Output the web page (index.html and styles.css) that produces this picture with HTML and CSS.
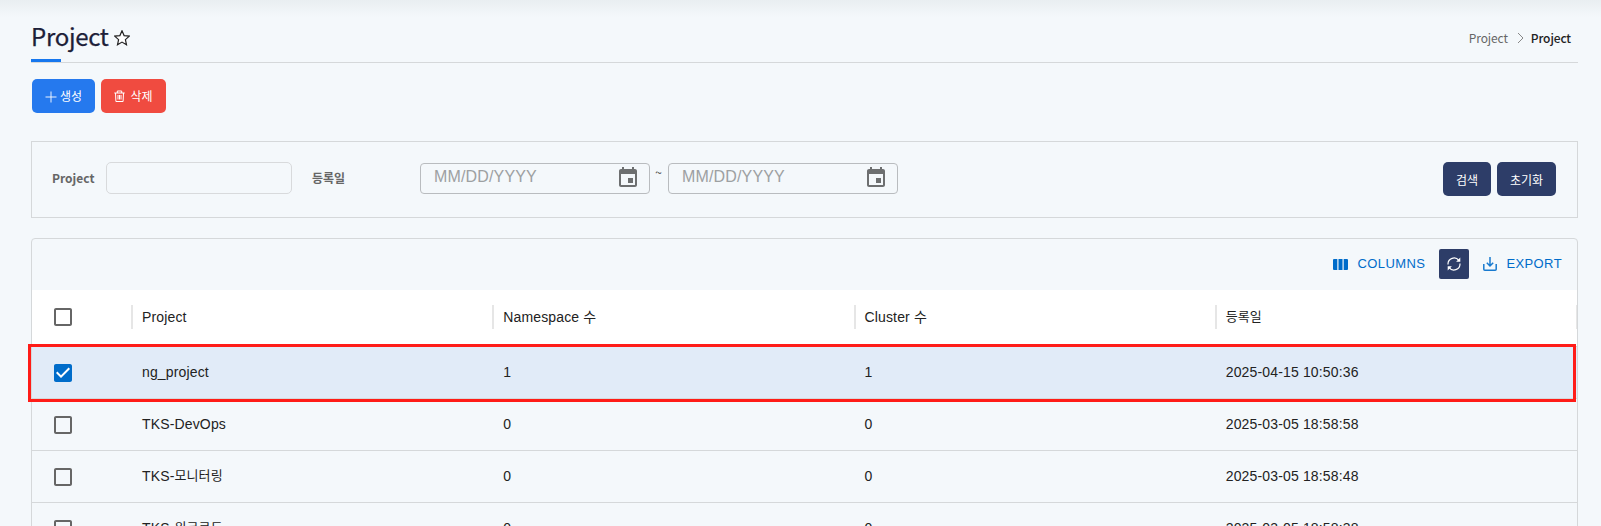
FILE: index.html
```html
<!DOCTYPE html>
<html lang="ko">
<head>
<meta charset="utf-8">
<title>Project</title>
<link rel="stylesheet" href="styles.css">
</head>
<body>
<svg class="defs" width="0" height="0">
  <symbol id="event" viewBox="0 0 24 24"><path d="M17 12h-5v5h5v-5zM16 1v2H8V1H6v2H5c-1.11 0-1.99.9-1.99 2L3 19c0 1.1.89 2 2 2h14c1.1 0 2-.9 2-2V5c0-1.1-.9-2-2-2h-1V1h-2zm3 18H5V8h14v11z"/></symbol>
  <symbol id="box" viewBox="0 0 24 24"><path d="M19 5v14H5V5h14m0-2H5c-1.1 0-2 .9-2 2v14c0 1.1.9 2 2 2h14c1.1 0 2-.9 2-2V5c0-1.1-.9-2-2-2z"/></symbol>
  <symbol id="box-on" viewBox="0 0 24 24"><path d="M19 3H5c-1.11 0-2 .9-2 2v14c0 1.1.89 2 2 2h14c1.11 0 2-.9 2-2V5c0-1.1-.89-2-2-2zm-9 14l-5-5 1.41-1.41L10 14.17l7.59-7.59L19 8l-9 9z"/></symbol>
</svg>
<main class="page">
  <header class="page-head">
    <h1 class="title">Project</h1>
    <svg class="star" viewBox="0 0 16 16"><path d="M8 .8l2.100 4.800 5.200.5-3.900 3.500 1.100 5.100L8 12.100l-4.500 2.600 1.100-5.100L.7 6.100l5.200-.5z"/></svg>
    <nav class="crumbs">
      <span>Project</span>
      <svg class="chevron" viewBox="0 0 7 12"><path d="M1 1l5 5-5 5"/></svg>
      <span class="current">Project</span>
    </nav>
  </header>
  <div class="actions">
    <button class="btn create"><svg class="plus" viewBox="0 0 12 12"><path d="M6 .5v11M.5 6h11"/></svg>생성</button>
    <button class="btn remove"><svg class="trash" viewBox="0 0 11 12"><path d="M.3 3h10.400M3.300 3V1h4.400v2M1.500 3l.4 8.500h7.200L9.500 3M4 5v4.500M5.500 5v4.500M7 5v4.500"/></svg>삭제</button>
  </div>
  <section class="filter">
    <label class="label">Project</label>
    <div class="input"></div>
    <label class="label date-label">등록일</label>
    <div class="date"><span>MM/DD/YYYY</span><svg class="cal"><use href="#event"/></svg></div>
    <span class="tilde">~</span>
    <div class="date"><span>MM/DD/YYYY</span><svg class="cal"><use href="#event"/></svg></div>
    <div class="filter-buttons">
      <button class="btn navy">검색</button>
      <button class="btn navy">초기화</button>
    </div>
  </section>
  <section class="grid">
    <div class="toolbar">
      <span class="tool"><svg class="cols" viewBox="0 0 15 11"><path d="M1 0h3.300v11H1a1 1 0 0 1-1-1V1a1 1 0 0 1 1-1zM5.500 0h4v11h-4zM10.700 0H14a1 1 0 0 1 1 1v9a1 1 0 0 1-1 1h-3.300z"/></svg>COLUMNS</span>
      <button class="refresh"><svg viewBox="0 0 14 14"><path d="M1 7.500V7A6 6 0 0 1 11.800 3.400M13 6.500V7A6 6 0 0 1 2.200 10.600"/><path class="tip" d="M13.300.6v4.200H9.100zM.7 13.400V9.200h4.200z"/></svg></button>
      <span class="tool export"><svg class="down" viewBox="0 0 14 14"><path d="M.8 7v5.200c0 .6.4 1 1 1h10.400c.6 0 1-.4 1-1V7M7 0v8.500M3.800 5.800L7 9l3.200-3.200"/></svg>EXPORT</span>
    </div>
    <div class="row head">
      <div class="cell check"><svg><use href="#box"/></svg></div>
      <div class="cell">Project</div>
      <div class="cell">Namespace 수</div>
      <div class="cell">Cluster 수</div>
      <div class="cell"><span class="ko">등록일</span></div>
    </div>
    <div class="row selected">
      <div class="cell check"><svg><use href="#box-on"/></svg></div>
      <div class="cell">ng_project</div><div class="cell">1</div><div class="cell">1</div><div class="cell">2025-04-15 10:50:36</div>
    </div>
    <div class="row">
      <div class="cell check"><svg><use href="#box"/></svg></div>
      <div class="cell">TKS-DevOps</div><div class="cell">0</div><div class="cell">0</div><div class="cell">2025-03-05 18:58:58</div>
    </div>
    <div class="row">
      <div class="cell check"><svg><use href="#box"/></svg></div>
      <div class="cell">TKS-<span class="ko">모니터링</span></div><div class="cell">0</div><div class="cell">0</div><div class="cell">2025-03-05 18:58:48</div>
    </div>
    <div class="row">
      <div class="cell check"><svg><use href="#box"/></svg></div>
      <div class="cell">TKS-<span class="ko">워크로드</span></div><div class="cell">0</div><div class="cell">0</div><div class="cell">2025-03-05 18:58:38</div>
    </div>
  </section>
</main>
</body>
</html>
```

FILE: styles.css
```css
*, *::after { box-sizing: border-box; }
html, body { margin: 0; height: 526px; overflow: hidden; }
body {
  background: linear-gradient(#e9eef1 0, #f4f8fb 17px) #f4f8fb;
  font-family: "Noto Sans CJK KR", sans-serif;
  color: #222;
}
svg { display: block; flex: none; }
.defs { position: absolute; }
button { border: 0; margin: 0; font: inherit; }
.page { height: 526px; overflow: hidden; padding: 0 23px 0 31px; }

.page-head {
  position: relative;
  display: flex;
  align-items: center;
  height: 63px;
  padding: 13px 7px 0 0;
  border-bottom: 1px solid #d5d8da;
}
.page-head::after {
  content: "";
  position: absolute;
  left: 0;
  bottom: 0;
  width: 30px;
  height: 3px;
  background: #1677ee;
}
.title { margin: 0; padding-bottom: 3px; width: 77px; font-size: 24px; font-weight: 400; line-height: 36px; letter-spacing: -.3px; color: #1c2038; -webkit-text-stroke: .25px #1c2038; }
.star { width: 16px; height: 16px; margin-left: 6px; fill: #fff; stroke: #222; stroke-width: 1.2; }
.crumbs { display: flex; align-items: center; margin-left: auto; font-size: 12px; line-height: 20px; letter-spacing: -.12px; color: #666; }
.chevron { width: 7px; height: 12px; margin: 0 7px 0 9px; fill: none; stroke: #888; stroke-width: 1; }
.current { color: #222; font-weight: 500; }

.actions { display: flex; gap: 6px; padding: 16px 1px 0; }
.btn {
  display: flex;
  align-items: center;
  justify-content: center;
  height: 34px;
  padding: 0 0 1px;
  border-radius: 5px;
  color: #fff;
  font-size: 12px;
}
.create { width: 63px; gap: 3px; background: #2579ee; }
.remove { width: 65px; gap: 5px; background: #f04b40; }
.plus { width: 12px; height: 12px; margin-top: 2px; fill: none; stroke: #fff; stroke-width: .9; }
.trash { width: 11px; height: 12px; margin-top: 1px; fill: none; stroke: #fff; stroke-width: 1; }

.filter {
  display: flex;
  height: 77px;
  margin: 28px 1px 0 0;
  padding: 20px 21px 0 20px;
  width: 1547px;
  border: 1px solid #d5d8da;
}
.label { width: 54px; font-size: 12px; font-weight: 700; line-height: 31px; color: #666; }
.input { width: 186px; height: 32px; margin-right: 20px; border: 1px solid #d8dadc; border-radius: 5px; }
.date-label { width: 108px; }
.date {
  display: flex;
  justify-content: space-between;
  width: 230px;
  height: 31px;
  margin-top: 1px;
  padding: 2px 9px 0 13px;
  border: 1px solid #b9bcbf;
  border-radius: 4px;
  font: 16px/22px "Liberation Sans", sans-serif;
  letter-spacing: .15px;
  color: #9da0a2;
}
.cal { width: 24px; height: 24px; fill: #6d6f70; }
.tilde { width: 17px; margin-right: 1px; text-align: center; font-size: 12px; line-height: 20px; color: #444; }
.filter-buttons { display: flex; gap: 6px; margin-left: auto; }
.navy { width: 48px; padding: 0; background: #2d3d68; }
.navy + .navy { width: 59px; }

.grid {
  width: 1547px;
  height: 400px;
  margin-top: 20px;
  border: 1px solid #d5d8da;
  border-radius: 4px 4px 0 0;
}
.toolbar {
  display: flex;
  align-items: center;
  justify-content: flex-end;
  height: 51px;
  padding: 0 15px 2px 0;
  font: 13px "Liberation Sans", sans-serif;
  letter-spacing: .4px;
  color: #006cca;
}
.tool { display: flex; align-items: center; }
.cols { width: 15px; height: 11px; margin: 1px 10px 0 0; fill: #006cca; }
.down { width: 14px; height: 14px; margin: 0 9px 0 0; fill: none; stroke: #187acf; stroke-width: 1.5; }
.refresh {
  display: grid;
  place-items: center;
  width: 30px;
  height: 30px;
  margin: 0 14px;
  padding: 0;
  border-radius: 2px;
  background: #2d3d68;
}
.refresh svg { width: 14px; height: 14px; fill: none; stroke: #fff; stroke-width: 1.2; }
.refresh .tip { fill: #fff; stroke: none; }

.row {
  display: grid;
  grid-template-columns: 100px repeat(4, 1fr);
  height: 52px;
  border-bottom: 1px solid #d5d8da;
  font: 14px/20px "Liberation Sans", "Noto Sans CJK KR", sans-serif;
  letter-spacing: .15px;
}
.cell { position: relative; display: flex; align-items: center; padding: 0 0 2px 10px; }
.ko { font-size: 13px; letter-spacing: .1px; }
.check { padding: 0 0 0 19px; }
.check svg { width: 24px; height: 24px; fill: #666; }
.head { height: 57px; background: #fff; }
.head .check { padding-bottom: 2px; }
.head .cell::after {
  content: "";
  position: absolute;
  right: -1px;
  top: 15px;
  width: 2px;
  height: 24px;
  background: #e6e6e6;
}
.head .cell:last-child::after { right: 0; width: 1px; }
.selected { position: relative; background: #e1ebf8; }
.selected .check svg { fill: #006cca; background: linear-gradient(#fff, #fff) center / 14px 14px no-repeat; }
/* highlight frame around the chosen row */
.selected::after {
  content: "";
  position: absolute;
  left: -4px;
  top: -3px;
  width: 1548px;
  height: 58px;
  border: 3px solid #ff1c18;
}
```
